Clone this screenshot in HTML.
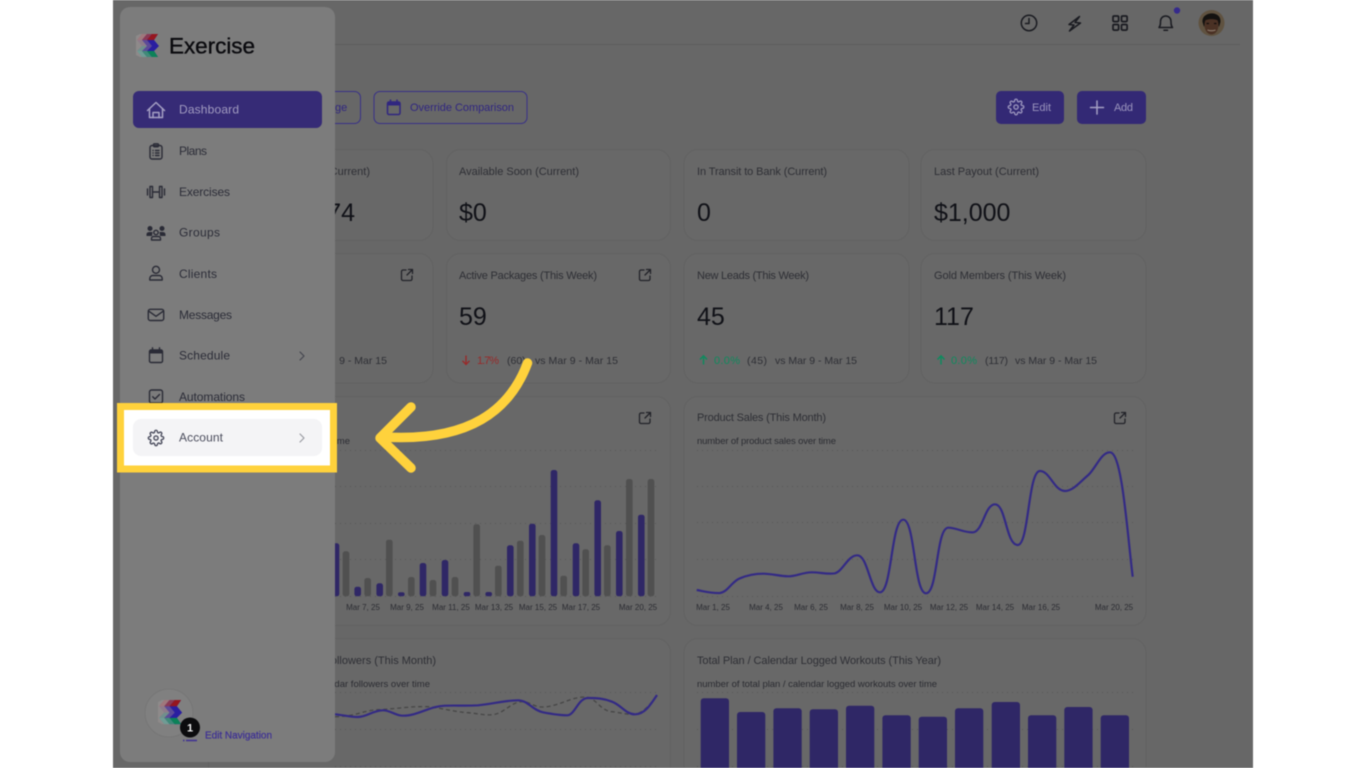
<!DOCTYPE html>
<html lang="en"><head><meta charset="utf-8"><title>Exercise Dashboard</title>
<style>
html,body{margin:0;padding:0;width:1366px;height:768px;overflow:hidden;background:#fff}
svg{display:block;position:absolute;left:0;top:0;filter:blur(.4px)}
text{font-family:"Liberation Sans",sans-serif}
.l{font-size:11px;fill:#2e2f35}
.v{font-size:25px;fill:#101117}
.d{font-size:10.500px;fill:#2e2f35}
.t{font-size:8px;fill:#2b2c32;text-anchor:middle}
.n{font-size:12px;fill:#2c2d38}
.s{font-size:9.500px;fill:#2b2c32}
.card{fill:#686868;stroke:#626262;stroke-width:1}
.grid{stroke:#575757;stroke-width:1;stroke-dasharray:1 4;fill:none}
.ic{fill:none;stroke:#2a2b36;stroke-width:1.400;stroke-linecap:round;stroke-linejoin:round}
.ext{fill:none;stroke:#222329;stroke-width:1.300;stroke-linecap:round;stroke-linejoin:round}
.b{fill:#2f2766}.g{fill:#505050}
</style></head><body>
<svg width="1366" height="768" viewBox="0 0 1366 768" xmlns="http://www.w3.org/2000/svg">
<defs>
<path id="gear" d="M12 15a3 3 0 1 0 0-6 3 3 0 0 0 0 6z M19.4 15a1.65 1.65 0 0 0 .33 1.82l.06.06a2 2 0 0 1-2.83 2.83l-.06-.06a1.65 1.65 0 0 0-1.82-.33 1.65 1.65 0 0 0-1 1.51V21a2 2 0 0 1-4 0v-.09A1.65 1.65 0 0 0 9 19.4a1.65 1.65 0 0 0-1.82.33l-.06.06a2 2 0 0 1-2.83-2.83l.06-.06a1.65 1.65 0 0 0 .33-1.82 1.65 1.65 0 0 0-1.51-1H3a2 2 0 0 1 0-4h.09A1.65 1.65 0 0 0 4.6 9a1.65 1.65 0 0 0-.33-1.82l-.06-.06a2 2 0 0 1 2.83-2.83l.06.06a1.65 1.65 0 0 0 1.82.33H9a1.65 1.65 0 0 0 1-1.51V3a2 2 0 0 1 4 0v.09a1.65 1.65 0 0 0 1 1.51 1.65 1.65 0 0 0 1.82-.33l.06-.06a2 2 0 0 1 2.83 2.83l-.06.06a1.65 1.65 0 0 0-.33 1.82V9a1.65 1.65 0 0 0 1.51 1H21a2 2 0 0 1 0 4h-.09a1.65 1.65 0 0 0-1.51 1z"/>
<path id="ext" d="M-1 -5H-4a1.5 1.5 0 0 0-1.5 1.5V4A1.5 1.5 0 0 0-4 5.5H3.5A1.5 1.5 0 0 0 5 4V1M0 0L5.5-5.5M1.5-5.5H5.5V-1.5"/>
<g id="logo">
<path d="M136 36L140 34H146V57H140L136 55Z" fill="#8e8a8a"/>
<path d="M142 34H148L144 40L149 46L144 51L148 57H142L137 51L142 46L137 40Z" fill="#8d7b8a"/>
<path d="M142 34H148L144 40H137Z" fill="#a0787c"/>
<path d="M142 46L137 51H144L149 46Z" fill="#6f8f8c"/>
<path d="M137 51H144L148 57H142Z" fill="#6f9c94"/>
<path d="M147 34H153L149 40L154 46L149 51L153 57H147L142 51L147 46L142 40Z" fill="#5c4a98"/>
<path d="M147 34H153L149 40H142Z" fill="#8a3a55"/>
<path d="M142 51H149L153 57H147Z" fill="#3f8a78"/>
<path d="M152 34H158L154 40L159 46L154 51L158 57H152L147 51L152 46L147 40Z" fill="#2a1ea0"/>
<path d="M152 34H158L154 40H147Z" fill="#96161f"/>
<path d="M147 51H154L158 57H152Z" fill="#0c8258"/>
</g>
</defs>

<!-- page -->
<rect x="113" y="0" width="1140" height="768" fill="#676767"/>
<line x1="335" y1="44.500" x2="1240" y2="44.500" stroke="#5d5d5d"/>

<!-- top icons -->
<g class="ic" style="stroke:#1a1b21;stroke-width:1.500">
<circle cx="1029" cy="23" r="7.700"/><path d="M1029 18.500V23.500H1025.500"/>
<path d="M1079.500 16.500L1069 24.500L1074 25L1069.500 31L1080.500 23L1075 22.500Z"/>
<rect x="1113" y="16" width="5.600" height="5.600" rx="1.200" style="stroke-width:1.700"/><rect x="1121.500" y="16" width="5.600" height="5.600" rx="1.200" style="stroke-width:1.700"/><rect x="1113" y="24.500" width="5.600" height="5.600" rx="1.200" style="stroke-width:1.700"/><rect x="1121.500" y="24.500" width="5.600" height="5.600" rx="1.200" style="stroke-width:1.700"/>
<path d="M1159 27.500C1160.500 25.500 1160.500 24 1160.500 21.500C1160.500 18.500 1162.500 16 1165.700 16C1169 16 1171 18.500 1171 21.500C1171 24 1171 25.500 1172.500 27.500Z"/><path d="M1164 30.300H1167.500"/>
</g>
<circle cx="1177" cy="10.500" r="3.200" fill="#352a8c"/>
<circle cx="1211.500" cy="23" r="13" fill="#5f5240"/>
<path d="M1202.500 22C1201.500 11 1221.500 10 1220.500 22L1219 27L1217 19H1206L1204 27Z" fill="#141210"/>
<ellipse cx="1211.500" cy="25" rx="7" ry="9.500" fill="#4a3124"/>
<path d="M1204.500 21C1207 18.500 1216 18.500 1218.500 21L1218 15.500H1205Z" fill="#141210"/>
<path d="M1207.500 30C1209.500 31 1213.500 31 1215.500 30" stroke="#8c7a6c" stroke-width="1.200" fill="none"/>
<path d="M1206.500 23.500H1209M1214 23.500H1216.500" stroke="#140e0c" stroke-width="1.300"/>

<!-- action buttons -->
<rect x="200" y="91.500" width="160.500" height="32" rx="6" fill="none" stroke="#383088"/>
<text x="335" y="111" class="n" style="font-size:11px;fill:#302680">ge</text>
<rect x="374" y="91.500" width="153" height="32" rx="6" fill="none" stroke="#383088"/>
<g fill="none" stroke="#302680" stroke-width="1.500"><rect x="387.500" y="102" width="12.500" height="12.500" rx="1.500"/><path d="M390.500 99.500V102M397 99.500V102"/></g>
<rect x="387.500" y="102" width="12.500" height="3.500" fill="#302680"/>
<text x="410" y="111" class="n" style="font-size:11px;fill:#302680" textLength="104">Override Comparison</text>
<rect x="996" y="91" width="68" height="33" rx="5" fill="#332975"/>
<rect x="1077" y="91" width="69" height="33" rx="5" fill="#332975"/>
<use href="#gear" transform="translate(1007.500 98.500) scale(.71)" fill="none" stroke="#9a94bd" stroke-width="1.900"/>
<text x="1032" y="111" class="n" style="font-size:11px;fill:#9a94bd" textLength="19">Edit</text>
<path d="M1097 101V114M1090.500 107.500H1103.500" stroke="#a5a0c4" stroke-width="1.500" stroke-linecap="round"/>
<text x="1114" y="111" class="n" style="font-size:11px;fill:#9a94bd" textLength="19">Add</text>

<!-- stat cards -->
<rect class="card" x="208.500" y="149.500" width="224.500" height="91" rx="14"/>
<rect class="card" x="446.500" y="149.500" width="224" height="91" rx="14"/>
<rect class="card" x="684" y="149.500" width="225" height="91" rx="14"/>
<rect class="card" x="921" y="149.500" width="225" height="91" rx="14"/>
<rect class="card" x="208.500" y="253.500" width="224.500" height="129.500" rx="14"/>
<rect class="card" x="446.500" y="253.500" width="224" height="129.500" rx="14"/>
<rect class="card" x="684" y="253.500" width="225" height="129.500" rx="14"/>
<rect class="card" x="921" y="253.500" width="225" height="129.500" rx="14"/>

<text x="370" y="175" class="l" text-anchor="end">Current)</text>
<text x="355" y="221" class="v" text-anchor="end">74</text>
<text x="459" y="175" class="l" textLength="120">Available Soon (Current)</text>
<text x="459" y="221" class="v">$0</text>
<text x="697" y="175" class="l" textLength="130">In Transit to Bank (Current)</text>
<text x="697" y="221" class="v">0</text>
<text x="934" y="175" class="l" textLength="105">Last Payout (Current)</text>
<text x="934" y="221" class="v">$1,000</text>

<use href="#ext" class="ext" x="407" y="275"/>
<use href="#ext" class="ext" x="645" y="275"/>
<text x="387" y="364" class="d" text-anchor="end">9 - Mar 15</text>
<text x="459" y="279" class="l" textLength="138">Active Packages (This Week)</text>
<text x="459" y="325" class="v">59</text>
<path d="M466 355.500V364M462.500 360.800L466 364.500L469.500 360.800" fill="none" stroke="#982a2a" stroke-width="1.400"/>
<text x="477" y="364" class="d" style="fill:#982a2a;font-size:11px" textLength="22">1.7%</text>
<text x="507" y="364" class="d">(60)</text>
<text x="535" y="364" class="d" textLength="83">vs Mar 9 - Mar 15</text>
<text x="697" y="279" class="l" textLength="112">New Leads (This Week)</text>
<text x="697" y="325" class="v">45</text>
<path d="M703.500 364.500V356M700 359.500L703.500 355.800L707 359.500" fill="none" stroke="#0f8a5e" stroke-width="1.500"/>
<text x="714" y="364" class="d" style="fill:#0f8a5e;font-size:11px" textLength="26">0.0%</text>
<text x="747" y="364" class="d" textLength="20">(45)</text>
<text x="775" y="364" class="d" textLength="82">vs Mar 9 - Mar 15</text>
<text x="934" y="279" class="l" textLength="132">Gold Members (This Week)</text>
<text x="934" y="325" class="v">117</text>
<path d="M941 364.500V356M937.500 359.500L941 355.800L944.500 359.500" fill="none" stroke="#0f8a5e" stroke-width="1.500"/>
<text x="951" y="364" class="d" style="fill:#0f8a5e;font-size:11px" textLength="26">0.0%</text>
<text x="985" y="364" class="d" textLength="23">(117)</text>
<text x="1015" y="364" class="d" textLength="82">vs Mar 9 - Mar 15</text>

<!-- chart cards -->
<rect class="card" x="208.500" y="396.500" width="462" height="229" rx="14"/>
<rect class="card" x="684" y="396.500" width="462" height="229" rx="14"/>
<rect class="card" x="208.500" y="638.500" width="462" height="140" rx="14"/>
<rect class="card" x="684" y="638.500" width="462" height="140" rx="14"/>
<use href="#ext" class="ext" x="645" y="418"/>
<use href="#ext" class="ext" x="1120" y="418"/>
<text x="350" y="444" class="s" text-anchor="end">me</text>
<text x="697" y="421" class="l" textLength="129">Product Sales (This Month)</text>
<text x="697" y="444" class="s" textLength="139">number of product sales over time</text>
<text x="436" y="664" class="l" text-anchor="end">Followers (This Month)</text>
<text x="430" y="687" class="s" text-anchor="end">calendar followers over time</text>
<text x="697" y="664" class="l" textLength="244">Total Plan / Calendar Logged Workouts (This Year)</text>
<text x="697" y="687" class="s" textLength="240">number of total plan / calendar logged workouts over time</text>

<path class="grid" d="M335 450.500H658M335 486.500H658M335 523.500H658M335 559.500H658M335 596.500H658"/>
<path class="grid" d="M697 450.500H1133M697 486.500H1133M697 522.500H1133M697 559.500H1133M697 596.500H1133"/>
<path class="grid" d="M335 692.500H658M335 729.500H658M335 766.500H658"/>
<path class="grid" d="M697 692.500H1133M697 729.500H1133M697 766.500H1133"/>

<!-- bars chart 1 -->
<g class="b">
<rect x="332.700" y="543.300" width="6.600" height="53" rx="2.500"/><rect x="354.400" y="586.700" width="6.600" height="9.600" rx="2.500"/><rect x="376.400" y="583.300" width="6.600" height="13" rx="2.500"/><rect x="398" y="592.300" width="6.600" height="4" rx="2"/><rect x="419.700" y="563" width="6.600" height="33.300" rx="2.500"/><rect x="441.700" y="560" width="6.600" height="36.300" rx="2.500"/><rect x="463.700" y="592" width="6.600" height="4.300" rx="2"/><rect x="485.400" y="592" width="6.600" height="4.300" rx="2"/><rect x="507" y="545.300" width="6.600" height="51" rx="2.500"/><rect x="529" y="523.700" width="6.600" height="72.600" rx="2.500"/><rect x="550.700" y="470" width="6.600" height="126.300" rx="2.500"/><rect x="572.700" y="543.300" width="6.600" height="53" rx="2.500"/><rect x="594.400" y="500.300" width="6.600" height="96" rx="2.500"/><rect x="616" y="531" width="6.600" height="65.300" rx="2.500"/><rect x="638" y="514.700" width="6.600" height="81.600" rx="2.500"/>
</g>
<g class="g">
<rect x="342.700" y="551.300" width="6.600" height="45" rx="2.500"/><rect x="364.400" y="578" width="6.600" height="18.300" rx="2.500"/><rect x="386" y="539.700" width="6.600" height="56.600" rx="2.500"/><rect x="408" y="577" width="6.600" height="19.300" rx="2.500"/><rect x="429.700" y="580" width="6.600" height="16.300" rx="2.500"/><rect x="451.700" y="577" width="6.600" height="19.300" rx="2.500"/><rect x="473.400" y="524.300" width="6.600" height="72" rx="2.500"/><rect x="495" y="565.700" width="6.600" height="30.600" rx="2.500"/><rect x="517" y="540.700" width="6.600" height="55.600" rx="2.500"/><rect x="538.700" y="535" width="6.600" height="61.300" rx="2.500"/><rect x="560.400" y="575.700" width="6.600" height="20.600" rx="2.500"/><rect x="582.400" y="549.300" width="6.600" height="47" rx="2.500"/><rect x="604" y="545.300" width="6.600" height="51" rx="2.500"/><rect x="626" y="479" width="6.600" height="117.300" rx="2.500"/><rect x="647.700" y="479" width="6.600" height="117.300" rx="2.500"/>
</g>
<text x="363" y="610" class="t">Mar 7, 25</text><text x="407" y="610" class="t">Mar 9, 25</text><text x="451" y="610" class="t">Mar 11, 25</text><text x="494" y="610" class="t">Mar 13, 25</text><text x="538" y="610" class="t">Mar 15, 25</text><text x="581" y="610" class="t">Mar 17, 25</text><text x="638" y="610" class="t">Mar 20, 25</text>

<!-- product line -->
<path d="M696.700 590C705 591.500 712 593.500 720 593C728 592 732 581 740 578.300C748 575 755 573.700 763.300 573.700C772 573.700 780 576.300 788.300 576.300C796 576.300 803 572.300 811.700 572.300C820 572.300 827 574.500 835 573.300C843 571 848 555.300 857.300 555.300C868 555.300 870 592.300 880 592.300C892 592.300 891 519.700 903.300 519.700C915 519.700 914 593.300 926 593.300C938 593.300 936 527.700 948.300 527.700C957 527.700 964 533 973.300 532.300C983 531 985 504.300 995 504.300C1006 504.300 1006 545 1017.700 545C1029 545 1028 471 1040 471C1050 471 1054 491 1065 491C1073 491 1080 482 1088.300 475C1096 468 1101 452.300 1110 452.300C1122 452.300 1127 530 1132.700 576.700" fill="none" stroke="#332a85" stroke-width="2.200"/>
<text x="713" y="610" class="t">Mar 1, 25</text><text x="766" y="610" class="t">Mar 4, 25</text><text x="811" y="610" class="t">Mar 6, 25</text><text x="857" y="610" class="t">Mar 8, 25</text><text x="903" y="610" class="t">Mar 10, 25</text><text x="949" y="610" class="t">Mar 12, 25</text><text x="995" y="610" class="t">Mar 14, 25</text><text x="1041" y="610" class="t">Mar 16, 25</text><text x="1114" y="610" class="t">Mar 20, 25</text>

<!-- followers lines -->
<path d="M335 716.700C342 716.700 346 716 352 715C361 713 369 710 378 709.700C395 709 411 706 428 706.700C442 708 455 712 468 712.700C478 713.500 486 716 495 714.300C505 712 512 701.700 522 701.700C530 701.700 534 707 542 707C558 707 570 697 585 697C596 697 600 711 612 711.700C620 712.500 628 715 635 714.300C645 712 652 702 657 695" fill="none" stroke="#464646" stroke-width="1.300" stroke-dasharray="4 3"/>
<path d="M335 714.300C343 715 350 717 358 717C367 717 373 710.300 383 710.300C391 710.300 395 715.700 403 715.700C418 715.700 430 706 445 705.700C456 705.300 467 706 478 705.300C492 704 505 700.300 518 700.300C528 700.300 532 710 543 712.300C552 714 559 715.300 567 715.300C575 715.300 578 698 588 698C597 698 604 698.500 612 701.700C621 705 626 714.300 635 714.300C645 714.300 651 704 657 695" fill="none" stroke="#332a85" stroke-width="2.200"/>

<!-- plan bars -->
<g class="b">
<rect x="700.700" y="698.300" width="28.300" height="80" rx="3"/><rect x="737" y="712" width="28.300" height="66" rx="3"/><rect x="773.400" y="708.300" width="28.300" height="70" rx="3"/><rect x="809.700" y="709.300" width="28.300" height="69" rx="3"/><rect x="846" y="705.700" width="28.300" height="72" rx="3"/><rect x="882.400" y="715.300" width="28.300" height="63" rx="3"/><rect x="918.700" y="716.700" width="28.300" height="61" rx="3"/><rect x="955" y="708.300" width="28.300" height="70" rx="3"/><rect x="991.700" y="702" width="28.300" height="76" rx="3"/><rect x="1028" y="715.300" width="28.300" height="63" rx="3"/><rect x="1064.300" y="707" width="28.300" height="71" rx="3"/><rect x="1100.700" y="715.300" width="28.300" height="63" rx="3"/>
</g>

<!-- white letterbox -->
<rect x="0" y="0" width="113" height="768" fill="#fff"/>
<rect x="1253" y="0" width="113" height="768" fill="#fff"/>

<!-- sidebar -->
<rect x="120" y="7" width="215" height="755" rx="10" fill="#7c7c7c"/>
<use href="#logo"/>
<text x="169" y="53.500" style="font-size:22.500px;fill:#0a0a0e" stroke="#0a0a0e" stroke-width=".35" textLength="86">Exercise</text>

<rect x="133" y="91" width="189" height="37" rx="6" fill="#362b76"/>
<g fill="none" stroke="#a5a0c4" stroke-width="1.500" stroke-linejoin="round" stroke-linecap="round"><path d="M147.500 110.500L156 102.500L164.500 110.500"/><path d="M149.500 108.500V117.500H162.500V108.500"/><path d="M153 117.500V112.500H159V117.500"/></g>
<text x="179" y="113.500" class="n" style="fill:#a19bc0" textLength="60">Dashboard</text>

<g class="ic">
<rect x="150" y="145.500" width="12" height="13.500" rx="2"/><rect x="153.500" y="143.800" width="5" height="3" rx="1"/><path d="M153 150.500H153.100M155.500 150.500H159M153 153H153.100M155.500 153H159M153 155.500H153.100M155.500 155.500H159"/>
<path d="M147.500 189V195M150 186.500V197.500H152.500V186.500ZM152.500 192H159.500M159.500 186.500V197.500H162V186.500ZM164.500 189V195"/>
<circle cx="156" cy="232.500" r="2.200"/><path d="M151.500 240V238.500A2 2 0 0 1 153.500 236.500H158.500A2 2 0 0 1 160.500 238.500V240Z"/>
<circle cx="156" cy="269.800" r="3.500"/><path d="M149.800 280V278.500A3 3 0 0 1 152.800 275.500H159.200A3 3 0 0 1 162.200 278.500V280Z"/>
<rect x="148.300" y="309.300" width="15.400" height="11.200" rx="2"/><path d="M149 311.300L156 316.300L163 311.300"/>
<rect x="149.500" y="350" width="13" height="12.500" rx="1.500"/><path d="M152.500 347.800V350M159.500 347.800V350"/>
<rect x="149.500" y="390" width="13" height="13" rx="2"/><path d="M152.700 396.700L155 399L159.500 394.500"/>
</g>
<rect x="149.500" y="350" width="13" height="3.500" fill="#2a2b36"/>
<g fill="#2a2b36"><circle cx="150" cy="228.500" r="2.500"/><circle cx="162" cy="228.500" r="2.500"/><path d="M146.500 236V234.500C146.500 232.500 148 232 150 232H152.500L152 236ZM165.500 236V234.500C165.500 232.500 164 232 162 232H159.500L160 236Z"/></g>
<text x="179" y="155" class="n" textLength="28">Plans</text>
<text x="179" y="196" class="n" textLength="51">Exercises</text>
<text x="179" y="236.500" class="n" textLength="41">Groups</text>
<text x="179" y="278" class="n" textLength="38">Clients</text>
<text x="179" y="319" class="n" textLength="53">Messages</text>
<text x="179" y="359.500" class="n" textLength="51">Schedule</text>
<text x="179" y="401" class="n" textLength="66">Automations</text>
<path d="M300 352L304 356L300 360" fill="none" stroke="#45464f" stroke-width="1.200" stroke-linecap="round" stroke-linejoin="round"/>

<!-- bottom widget -->
<circle cx="169" cy="713" r="24" fill="#808080" stroke="#767676"/>
<use href="#logo" transform="translate(158 700) scale(1.050) translate(-136 -34)"/>
<text x="205" y="738.500" style="font-size:10px;fill:#3d2f95" stroke="#3d2f95" stroke-width=".2" textLength="67">Edit Navigation</text>
<path d="M186 740.500H197" stroke="#3d2f95" stroke-width="1.500"/><path d="M183 740.500H184.500" stroke="#3d2f95" stroke-width="1.500"/>
<circle cx="190" cy="727.500" r="10" fill="#0c0c0e"/>
<text x="190" y="731.500" style="font-size:11px;fill:#eee;font-weight:bold" text-anchor="middle">1</text>

<!-- highlight -->
<rect x="120.500" y="406.500" width="213" height="62.500" fill="#fff" stroke="#ffd23c" stroke-width="7"/>
<rect x="133" y="419" width="189" height="37" rx="8" fill="#f4f4f6"/>
<use href="#gear" transform="translate(147.600 429.600) scale(.7)" fill="none" stroke="#4b4d5e" stroke-width="2"/>
<text x="179" y="441.500" class="n" style="fill:#4a4c5c" textLength="44">Account</text>
<path d="M300 434L304 438L300 442" fill="none" stroke="#9a9ba3" stroke-width="1.200" stroke-linecap="round" stroke-linejoin="round"/>

<!-- arrow -->
<g fill="none" stroke="#ffd23c" stroke-width="9.500" stroke-linecap="round" stroke-linejoin="round">
<path d="M527.500 363C510 410 470 442 384 437"/>
<path d="M411 407L380 438L411 468"/>
</g>
</svg>
</body></html>
